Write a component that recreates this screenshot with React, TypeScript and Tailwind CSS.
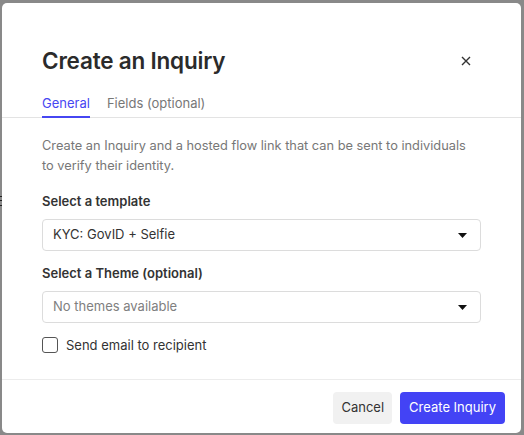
import React from 'react';

const Caret = () => (
  <svg width="9" height="5" viewBox="0 0 9 5" className="text-[#111]">
    <path d="M0 0h9L4.5 5z" fill="currentColor" />
  </svg>
);

const App = () => {
  return (
    <div
      className="w-[524px] h-[435px] bg-[#898989] relative overflow-hidden"
      style={{ fontFamily: 'Inter, "Noto Sans", sans-serif' }}
    >
      {/* page text peeking out behind the overlay */}
      <span className="absolute left-[-4px] top-[192px] text-[13px] text-[#222]">E</span>

      <div className="absolute left-[2px] top-[3px] w-[519px] h-[430px] bg-white rounded-[5px] flex flex-col">
        {/* Header */}
        <div className="flex items-center justify-between pl-[40px] pr-[50px] pt-[43px]">
          <h1 className="text-[22.5px] leading-[30px] font-semibold text-[#2b2b2b] tracking-[-0.2px]">Create an Inquiry</h1>
          <svg width="10" height="10" viewBox="0 0 10 10" className="text-[#333]">
            <path d="M1 1l8 8M9 1l-8 8" stroke="currentColor" strokeWidth="1.4" />
          </svg>
        </div>

        {/* Tabs */}
        <div className="flex gap-[17px] pl-[40px] mt-[18px] border-b border-[#e3e3e3]">
          <div className="pb-[4px] border-b-2 border-[#4646f2] -mb-px text-[13px] leading-[18px] text-[#4646f2]">General</div>
          <div className="pb-[4px] text-[13px] leading-[18px] text-[#777]">Fields (optional)</div>
        </div>

        {/* Body */}
        <div className="px-[40px] pt-[18px] flex-1">
          <p className="text-[12.8px] leading-[19.5px] text-[#777]">
            Create an Inquiry and a hosted flow link that can be sent to individuals to verify their identity.
          </p>

          <label className="block mt-[17px] text-[13px] leading-[19px] font-semibold text-[#333]">Select a template</label>
          <div className="mt-[8px] h-[32px] border border-[#dcdcdc] rounded-[4px] flex items-center justify-between pl-[10px] pr-[13px] text-[13px] text-[#333]">
            <span>KYC: GovID + Selfie</span>
            <Caret />
          </div>

          <label className="block mt-[13px] text-[13px] leading-[19px] font-semibold text-[#333]">Select a Theme (optional)</label>
          <div className="mt-[8px] h-[32px] border border-[#dcdcdc] rounded-[4px] flex items-center justify-between pl-[10px] pr-[13px] text-[13px] text-[#808080]">
            <span>No themes available</span>
            <Caret />
          </div>

          <label className="mt-[14px] flex items-center gap-[8px] text-[13px] leading-[16px] text-[#333]">
            <span className="w-[16px] h-[16px] border border-[#555] rounded-[3px] bg-white" />
            Send email to recipient
          </label>
        </div>

        {/* Footer */}
        <div className="border-t border-[#ececec] flex justify-end gap-[8px] pr-[16px] pt-[12px] pb-[9px]">
          <button className="h-[32px] px-[8px] rounded-[4px] bg-[#f1f1f1] text-[13px] text-[#333]">Cancel</button>
          <button className="h-[32px] px-[9px] rounded-[4px] bg-[#4343f5] text-[13px] text-white">Create Inquiry</button>
        </div>
      </div>
    </div>
  );
};

export default App;
